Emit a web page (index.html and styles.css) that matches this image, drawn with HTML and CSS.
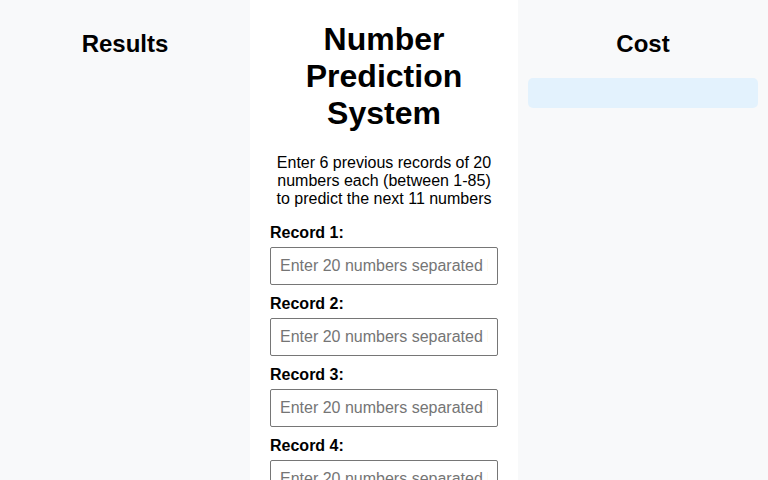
FILE: index.html
```html
<html lang="en">
<head>
  <meta charset="UTF-8">
  <meta name="viewport" content="width=device-width, initial-scale=1.0">
  <title>Number Prediction System</title>
  <link rel="stylesheet" href="styles.css">
</head>
<body>
  <div class="layout">
    <div class="side">
      <h2>Results</h2>
      <div id="results"></div>
    </div>

    <div class="main">
      <h1>Number Prediction System</h1>
      <p class="intro">Enter 6 previous records of 20 numbers each (between 1-85) to predict the next 11 numbers</p>

      <div class="form-group">
        <label for="record1">Record 1:</label>
        <input type="text" id="record1" placeholder="Enter 20 numbers separated by commas">
      </div>
      <div class="form-group">
        <label for="record2">Record 2:</label>
        <input type="text" id="record2" placeholder="Enter 20 numbers separated by commas">
      </div>
      <div class="form-group">
        <label for="record3">Record 3:</label>
        <input type="text" id="record3" placeholder="Enter 20 numbers separated by commas">
      </div>
      <div class="form-group">
        <label for="record4">Record 4:</label>
        <input type="text" id="record4" placeholder="Enter 20 numbers separated by commas">
      </div>
      <div class="form-group">
        <label for="record5">Record 5:</label>
        <input type="text" id="record5" placeholder="Enter 20 numbers separated by commas">
      </div>
      <div class="form-group">
        <label for="record6">Record 6:</label>
        <input type="text" id="record6" placeholder="Enter 20 numbers separated by commas">
      </div>
    </div>

    <div class="side">
      <h2>Cost</h2>
      <div class="cost-box" id="cost"></div>
    </div>
  </div>
</body>
</html>
```

FILE: styles.css
```css
body {
  font-family: "Liberation Sans", Arial, sans-serif;
  margin: 0;
  padding: 0;
  background-color: #f8f9fa;
  color: #000;
}

.layout {
  display: flex;
  min-height: 100vh;
}

.side {
  width: 250px;
  flex-shrink: 0;
  padding: 10px;
  box-sizing: border-box;
  background-color: #f8f9fa;
}

.side h2 {
  text-align: center;
  font-size: 24px;
  margin: 20px 0;
}

.cost-box {
  height: 30px;
  background-color: #e3f2fd;
  border-radius: 5px;
}

.main {
  flex: 1;
  padding: 0 20px;
  background-color: #fff;
}

h1 {
  text-align: center;
  font-size: 32px;
  margin: 21px 0;
}

.intro {
  text-align: center;
  font-size: 16px;
  margin: 22px 0 16px;
}

.form-group {
  margin-bottom: 10px;
}

label {
  display: block;
  font-weight: bold;
  margin-bottom: 5px;
}

input {
  display: block;
  width: 100%;
  box-sizing: border-box;
  height: 38px;
  padding: 8px 9px;
  border: 1px solid #767676;
  border-radius: 2px;
  font-family: inherit;
  font-size: 16px;
}

input::placeholder {
  color: #757575;
}
```
